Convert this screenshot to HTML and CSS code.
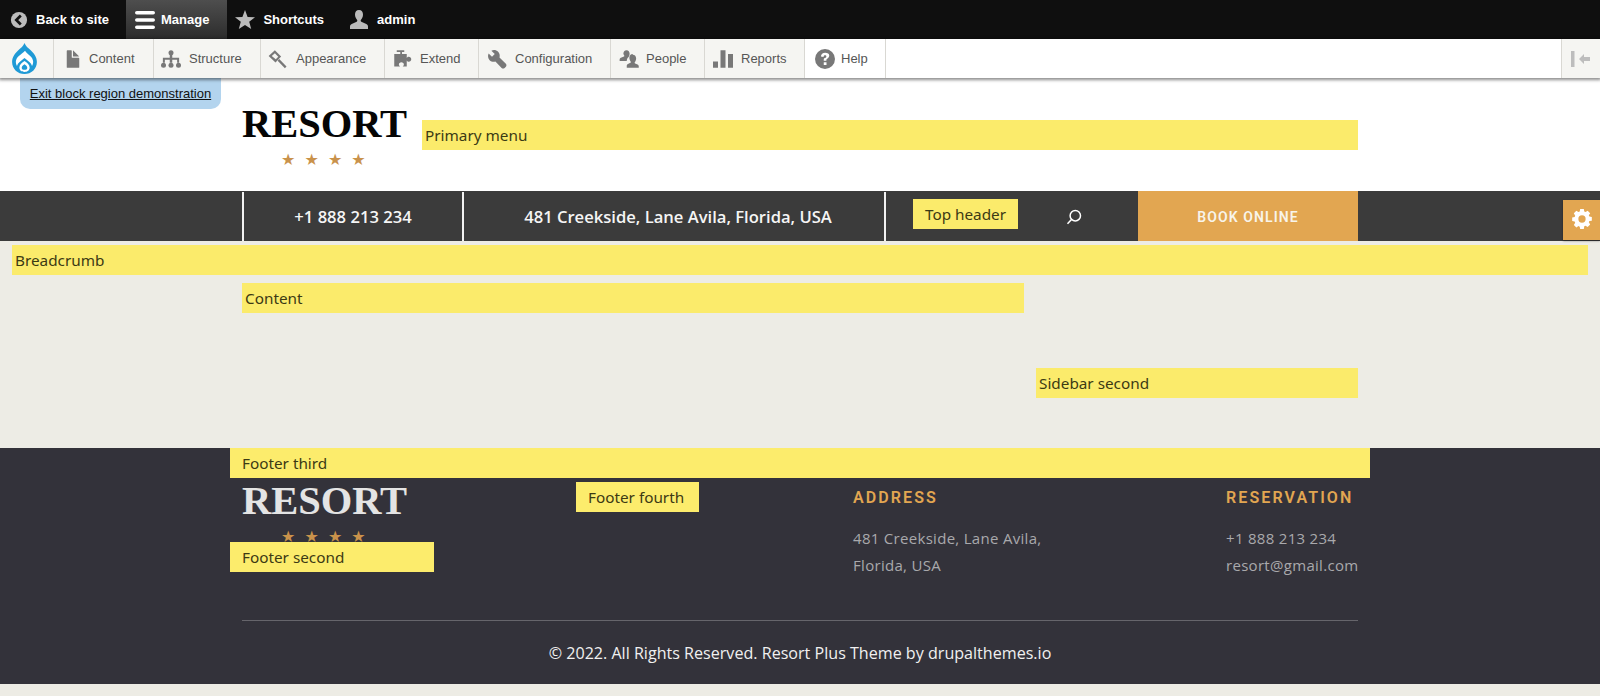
FILE: index.html
```html
<!DOCTYPE html>
<html>
<head>
  <meta name="viewport" content="width=device-width, initial-scale=1">
  <title>Block layout</title>
  <link rel="stylesheet" href="styles.css">
</head>
<body>
  <nav class="toolbar-bar">
    <a class="bar-tab tab-back" href="#">
      <svg class="bar-icon" viewBox="0 0 20 20"><circle cx="10" cy="10" r="9" fill="#bbb"/><path d="M12 5L7 10l5 5" fill="none" stroke="#111" stroke-width="3"/></svg>
      Back to site
    </a>
    <a class="bar-tab active" href="#">
      <svg class="bar-icon wide" viewBox="0 0 22 20"><path d="M2 0h18a2 2 0 010 4H2a2 2 0 010-4zM2 8h18a2 2 0 010 4H2a2 2 0 010-4zM2 16h18a2 2 0 010 4H2a2 2 0 010-4z" fill="#fff"/></svg>
      Manage
    </a>
    <a class="bar-tab tab-shortcuts" href="#">
      <svg class="bar-icon wide" viewBox="0 0 20 20"><path d="M10 0l2.600 6.900 7.400.3-5.800 4.600 2 7.200L10 15l-6.200 4 2-7.200L0 7.200l7.400-.3z" fill="#bbb"/></svg>
      Shortcuts
    </a>
    <a class="bar-tab" href="#">
      <svg class="bar-icon wide" viewBox="0 0 20 20"><path d="M10 0c2.700 0 4 2 4 4.500 0 2.300-1 4.200-2 5.300-.5.600-.4 1.500.3 1.900l5 2.300c1 .5 1.700 1.500 1.700 2.500v2.500H1v-2.500c0-1 .7-2 1.700-2.500l5-2.300c.7-.4.800-1.300.3-1.900-1-1.100-2-3-2-5.300C6 2 7.300 0 10 0z" fill="#bbb"/></svg>
      admin
    </a>
  </nav>

  <nav class="toolbar-tray">
    <a class="tray-item logo-item" href="#">
      <svg class="drupal-logo" viewBox="0 0 24 30">
        <path d="M12 0c1 3 3.500 4.800 6 7 3.200 2.900 6 6.800 6 11.300C24 25 18.600 30 12 30S0 25 0 18.300C0 13.800 2.800 9.900 6 7c2.500-2.200 5-4 6-7z" fill="#1f9ad6"/>
        <path d="M12.500 7.500c1.300 2 3.200 3.400 5 5.100 1.800 1.700 2.900 3.600 2.900 5.900 0 1.300-.4 2.600-1.100 3.700-.9-3-3.400-4.700-5.800-6.500l-1.500-1.200-1.500 1.200c-2.400 1.800-4.900 3.500-5.800 6.500-.7-1.100-1.100-2.400-1.100-3.700 0-2.300 1.100-4.200 2.900-5.900 2-1.900 4.700-3.300 6-5.100z" fill="#fff"/>
        <path d="M12 17.500c2.300 1.700 5 3.600 5 6.200 0 2.700-2.200 4.300-5 4.300s-5-1.600-5-4.300c0-2.600 2.700-4.500 5-6.200z" fill="#fff"/>
        <path d="M12 20.500c1.300 1 2.700 2 2.700 3.400 0 1.400-1.200 2.100-2.700 2.100s-2.700-.7-2.700-2.100c0-1.400 1.400-2.400 2.700-3.400z" fill="#1f9ad6"/>
      </svg>
    </a>
    <a class="tray-item w-content" href="#">
      <svg class="tray-icon" viewBox="0 0 16 16"><path d="M12.500 7h-5a.5.5 0 01-.5-.5v-5a.5.5 0 00-.5-.5h-3a.5.5 0 00-.5.5v13a.5.5 0 00.5.5h9a.5.5 0 00.5-.5V7.500a.5.5 0 00-.5-.5zM8.500 6h4c.3 0 .3-.2.1-.4L8.400 1.400C8.200 1.200 8 1.200 8 1.500v4a.5.5 0 00.5.5z"/></svg>
      Content
    </a>
    <a class="tray-item w-structure" href="#">
      <svg class="tray-icon" viewBox="0 0 16 16"><circle cx="8" cy="3" r="2"/><circle cx="2" cy="13" r="2"/><circle cx="8" cy="13" r="2"/><circle cx="14" cy="13" r="2"/><path d="M7 4h2v3h5.500v4h-1.600V8.600H9V11H7V8.600H3.100V11H1.500V7H7z"/></svg>
      Structure
    </a>
    <a class="tray-item w-appearance" href="#">
      <svg class="tray-icon" viewBox="0 0 16 16"><path fill-rule="evenodd" d="M.5 5.500L5.500 1l5 5-4.500 4.700zM3 5.600L6.200 8.200l2-2.100-2.700-2.700z"/><path d="M9 8l5.800 6-1.300 1.300L7.700 9.300z"/></svg>
      Appearance
    </a>
    <a class="tray-item w-extend" href="#">
      <svg class="tray-icon" viewBox="0 0 16 16"><path d="M3 1h6v1.300H7.200V4H11v3.200c.4-.7 1-1 1.600-1 1.100 0 2 .9 2 2s-.9 2-2 2c-.6 0-1.200-.4-1.600-1V14H7.800c.6-.5.900-1 .9-1.600 0-1-.9-1.800-2-1.800s-2 .8-2 1.800c0 .6.3 1.100.9 1.600H1V4h4.800V2.300H3z"/></svg>
      Extend
    </a>
    <a class="tray-item w-config" href="#">
      <svg class="tray-icon" viewBox="0 0 16 16"><path d="M1.300 3.600L4 6.200l2.200-2.200L3.500 1.300C5.300.4 7.500.8 8.900 2.100c1.200 1.200 1.600 3 1.100 4.600l5.100 5c.6.6.6 1.700 0 2.400l-1 1c-.7.6-1.800.6-2.400 0l-5-5.100c-1.600.5-3.400.1-4.600-1.100C.8 7.500.4 5.400 1.300 3.600z"/></svg>
      Configuration
    </a>
    <a class="tray-item w-people" href="#">
      <svg class="tray-icon" viewBox="0 0 16 16"><path d="M6 1c1.600 0 2.500 1.300 2.500 2.800 0 .9-.3 1.800-.8 2.500-1 .8-1.500 2-1.500 3.200H.5V8.500C.5 7.800 1 7.300 1.500 7L4 6c.3-.2.4-.6.2-.9C3.800 4.600 3.500 4.200 3.500 3.800 3.500 2.300 4.400 1 6 1z"/><path d="M11 4.500c1.700 0 2.700 1.300 2.700 3 0 1.200-.5 2.200-1 2.900-.3.4-.2.9.2 1.100l1.900.9c.6.3 1 .8 1 1.400V15H6.200v-1.700c0-.6.4-1.100 1-1.400l1.900-.9c.4-.2.5-.7.2-1.100-.5-.7-1-1.700-1-2.900 0-1.700 1-3 2.700-3z"/></svg>
      People
    </a>
    <a class="tray-item w-reports" href="#">
      <svg class="tray-icon" viewBox="0 0 16 16"><path d="M0 10h4v5H0zM6 1h4v14H6zM12 4h4v11h-4z"/></svg>
      Reports
    </a>
    <a class="tray-item w-help" href="#">
      <svg class="tray-icon" viewBox="0 0 16 16"><path fill-rule="evenodd" d="M8 0a8 8 0 110 16A8 8 0 018 0zM7 10.500v2.300h2.200v-2.300zM8.100 3C6.100 3 4.900 4.100 4.700 6l2.100.3c.1-.9.5-1.400 1.200-1.400.7 0 1.100.4 1.100 1 0 .5-.3.8-.9 1.300C7.300 7 7 7.700 7 9v.4h2.100V9c0-.7.2-1 .9-1.500.9-.7 1.400-1.400 1.400-2.400C11.400 3.900 10.100 3 8.100 3z"/></svg>
      Help
    </a>
    <span class="tray-spacer"></span>
    <a class="tray-toggle" href="#">
      <svg viewBox="0 0 20 16"><path d="M0 0h3.500v16H0zM8 8l5-5v3h6v4h-6v3z"/></svg>
    </a>
  </nav>

  <a class="exit-demo" href="#">Exit block region demonstration</a>

  <header class="site-header">
    <div class="container header-row">
      <div class="logo">
        <div class="logo-text">RESORT</div>
        <div class="logo-stars">★★★★</div>
      </div>
      <div class="region primary-menu">Primary menu</div>
    </div>
  </header>

  <div class="top-bar">
    <div class="container top-row">
      <div class="top-cell">+1 888 213 234</div>
      <div class="top-cell top-address">481 Creekside, Lane Avila, Florida, USA</div>
      <div class="top-cell top-tools">
        <div class="region top-header">Top header</div>
        <svg class="search-icon" viewBox="0 0 16 16"><circle cx="9.300" cy="6.700" r="5.200" fill="none" stroke="#fff" stroke-width="1.500"/><path d="M5.500 10.500L1.500 14.800" stroke="#fff" stroke-width="1.500"/></svg>
      </div>
      <a class="book-btn" href="#">BOOK ONLINE</a>
    </div>
  </div>

  <a class="settings-tab" href="#">
    <svg viewBox="-1 -1 22 22"><path fill="#fff" fill-rule="evenodd" d="M8 -1h4l.5 2.700 1.400.6 2.300-1.500L19 3.600l-1.500 2.300.6 1.400 2.700.5v4l-2.700.5-.6 1.400 1.500 2.300-2.800 2.800-2.300-1.500-1.400.6L12 21H8l-.5-2.600-1.400-.6-2.300 1.500L1 16.500l1.500-2.300-.6-1.400-2.700-.5v-4l2.700-.5.6-1.400L1 3.600l2.800-2.800 2.300 1.500 1.400-.6zM10 6a4 4 0 100 8 4 4 0 000-8z"/></svg>
  </a>

  <main class="page-main">
    <div class="region breadcrumb">Breadcrumb</div>
    <div class="container main-row">
      <div class="region content-region">Content</div>
      <aside class="sidebar">
        <div class="region">Sidebar second</div>
      </aside>
    </div>
  </main>

  <footer class="site-footer">
    <div class="footer-wide">
      <div class="region footer-label">Footer third</div>
      <div class="footer-grid">
        <div class="footer-col-logo">
          <div class="logo footer-logo">
            <div class="logo-text">RESORT</div>
            <div class="logo-stars">★★★★</div>
          </div>
          <div class="region footer-label footer-second">Footer second</div>
        </div>
        <div class="footer-col-fourth">
          <div class="region footer-label footer-fourth">Footer fourth</div>
        </div>
        <div class="footer-col">
          <h4>ADDRESS</h4>
          <p>481 Creekside, Lane Avila,<br>Florida, USA</p>
        </div>
        <div class="footer-col">
          <h4>RESERVATION</h4>
          <p>+1 888 213 234<br>resort@gmail.com</p>
        </div>
      </div>
    </div>
    <div class="container">
      <div class="copyright">© 2022. All Rights Reserved. Resort Plus Theme by drupalthemes.io</div>
    </div>
  </footer>
</body>
</html>
```
FILE: styles.css
```css
* {
  box-sizing: border-box;
}
body {
  margin: 0;
  background: #edece5;
  font-family: "Open Sans", sans-serif;
  color: #333;
}
a {
  text-decoration: none;
}

/* admin toolbar */
.toolbar-bar {
  display: flex;
  height: 39px;
  background: #0f0f0f;
}
.bar-tab {
  display: flex;
  align-items: center;
  gap: 8px;
  padding: 0 10px;
  font: bold 13px "Liberation Sans", sans-serif;
  color: #fff;
}
.tab-back {
  padding-right: 17px;
}
.bar-tab.active {
  padding: 0 18px 0 9px;
  gap: 6px;
  background: linear-gradient(#4e4e4e, #2c2c2c);
}
.tab-shortcuts {
  padding: 0 15px 0 8px;
}
.bar-icon {
  width: 18px;
  height: 18px;
}
.bar-icon.wide {
  width: 20px;
  height: 20px;
}
.toolbar-tray {
  position: relative;
  z-index: 2;
  display: flex;
  height: 39px;
  background: #fff;
  box-shadow: 0 1px 3px 1px rgba(0, 0, 0, 0.45);
}
.tray-item {
  display: flex;
  align-items: center;
  gap: 7px;
  padding-left: 8px;
  border-right: 1px solid #d9d8d3;
  background: #f5f5f2;
  font: 13px "Liberation Sans", sans-serif;
  color: #565656;
}
.logo-item {
  width: 54px;
  padding-left: 12px;
}
.drupal-logo {
  width: 25px;
  height: 31px;
}
.tray-icon {
  width: 20px;
  height: 20px;
  flex-shrink: 0;
  fill: #787878;
}
.w-content { width: 100px; padding-left: 9px; gap: 6px; }
.w-structure { width: 107px; padding-left: 7px; gap: 8px; }
.w-appearance { width: 124px; padding-left: 7px; gap: 8px; }
.w-extend { width: 94px; }
.w-config { width: 132px; gap: 8px; }
.w-people { width: 94px; }
.w-reports { width: 100px; gap: 8px; }
.w-help { width: 81px; padding-left: 10px; gap: 6px; background: #fff; }
.tray-spacer {
  flex: 1;
}
.tray-toggle {
  display: flex;
  align-items: center;
  justify-content: center;
  width: 39px;
  border-left: 1px solid #d9d8d3;
  background: #f5f5f2;
}
.tray-toggle svg {
  width: 20px;
  height: 16px;
  fill: #bdbdbd;
}
.exit-demo {
  position: absolute;
  z-index: 1;
  top: 78px;
  left: 20px;
  width: 201px;
  height: 31px;
  padding-top: 8px;
  border-radius: 0 0 10px 10px;
  background: #b3d4ee;
  font: 13px "Liberation Sans", sans-serif;
  color: #111;
  text-align: center;
  text-decoration: underline;
}

/* regions */
.region {
  height: 30px;
  padding-left: 3px;
  background: #fbeb6b;
  font: 15.300px/30px "Noto Sans", sans-serif;
  color: #3c3a14;
}
.container {
  width: 1116px;
  margin: 0 auto;
}
.logo-text {
  font: bold 40.500px/48px "Liberation Serif", serif;
  color: #050505;
}
.logo-stars {
  margin-top: 2px;
  padding-left: 39px;
  font: 16px/20px "DejaVu Sans", sans-serif;
  letter-spacing: 9.100px;
  color: #c9924b;
}

/* header */
.site-header {
  height: 113px;
  background: #fff;
}
.header-row {
  display: flex;
  gap: 16px;
  padding-top: 22px;
}
.logo {
  width: 164px;
  flex-shrink: 0;
}
.primary-menu {
  flex: 1;
  margin-top: 20px;
}

/* dark bar below header */
.top-bar {
  height: 50px;
  background: #3b3b3b;
}
.top-row {
  display: grid;
  grid-template-columns: 220px 422px 254px 1fr;
  height: 50px;
}
.top-cell {
  display: flex;
  align-items: center;
  justify-content: center;
  margin-top: 1px;
  padding-bottom: 1px;
  border-left: 2px solid #f2f2f2;
  font-size: 16.600px;
  font-weight: 600;
  color: #f5f5f5;
}
.top-address {
  padding-left: 8px;
}
.top-tools {
  justify-content: flex-start;
  padding-left: 27px;
}
.top-header {
  width: 105px;
  margin-top: -5px;
  padding: 0;
  font-size: 15.300px;
  font-weight: 400;
  color: #3c3a14;
  text-align: center;
}
.search-icon {
  width: 16px;
  height: 16px;
  margin: 2px 0 0 48px;
}
.book-btn {
  display: flex;
  align-items: center;
  justify-content: center;
  padding-top: 1px;
  background: #e2a651;
  font: 600 14px Roboto, sans-serif;
  letter-spacing: 1.100px;
  color: #f8f4ea;
}
.settings-tab {
  position: absolute;
  top: 200px;
  right: 0;
  display: flex;
  align-items: center;
  justify-content: center;
  width: 37px;
  height: 40px;
  background: #e2a651;
  box-shadow: 0 1px 2px rgba(0, 0, 0, 0.4);
}
.settings-tab svg {
  width: 20px;
  height: 20px;
  margin-top: -2px;
}

/* main */
.page-main {
  height: 207px;
  padding-top: 4px;
}
.breadcrumb {
  margin: 0 12px;
}
.main-row {
  display: grid;
  grid-template-columns: 782px 322px;
  gap: 12px;
  margin-top: 8px;
}
.sidebar {
  padding-top: 85px;
}

/* footer */
.site-footer {
  height: 236px;
  background: #33323a;
}
.footer-wide {
  width: 1140px;
  margin: 0 auto;
}
.footer-label {
  padding-left: 12px;
  background: #fcec6c;
}
.footer-grid {
  display: grid;
  grid-template-columns: 346px 265px 373px 1fr;
  height: 142px;
}
.footer-col-logo {
  position: relative;
  padding-left: 12px;
}
.footer-logo {
  margin-top: -1px;
}
.footer-logo .logo-text {
  color: #e4e4e4;
}
.footer-second {
  position: absolute;
  top: 64px;
  left: 0;
  width: 204px;
}
.footer-fourth {
  width: 123px;
  margin-top: 4px;
}
.footer-col {
  padding-left: 12px;
  color: #a9a9ac;
}
.footer-col h4 {
  margin: 9px 0 0;
  font: 600 16px/22px Roboto, sans-serif;
  letter-spacing: 2.100px;
  color: #e2a651;
}
.footer-col p {
  margin: 16px 0 0;
  font-size: 15px;
  line-height: 27px;
  letter-spacing: 0.300px;
}
.copyright {
  height: 64px;
  border-top: 1px solid #66656b;
  padding-top: 20px;
  font: 16.100px/24px "Open Sans", sans-serif;
  color: #f0f0f0;
  text-align: center;
}
```
